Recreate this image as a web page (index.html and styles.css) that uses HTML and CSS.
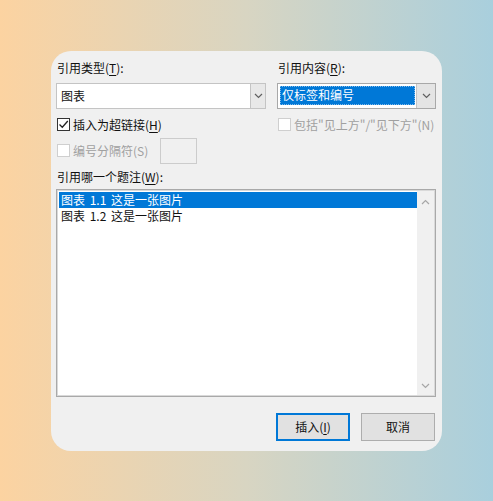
FILE: index.html
```html
<!DOCTYPE html>
<html lang="zh-CN">
<head>
    <meta charset="UTF-8">
    <meta name="viewport" content="width=device-width, initial-scale=1.0">
    <title>交叉引用</title>
    <link rel="stylesheet" href="styles.css">
</head>
<body>
    <div class="dialog">
        <div class="top-grid">
            <label class="field-label">引用类型(<u>T</u>):</label>
            <label class="field-label">引用内容(<u>R</u>):</label>

            <div class="combo">
                <span class="combo-value">图表</span>
                <span class="combo-arrow">
                    <svg width="9" height="6" viewBox="0 0 9 6"><path d="M1 1 L4.5 4.5 L8 1" fill="none" stroke="#606060" stroke-width="1.2"/></svg>
                </span>
            </div>
            <div class="combo combo-focus">
                <span class="combo-value selected">仅标签和编号</span>
                <span class="combo-arrow wide">
                    <svg width="9" height="6" viewBox="0 0 9 6"><path d="M1 1 L4.5 4.5 L8 1" fill="none" stroke="#606060" stroke-width="1.2"/></svg>
                </span>
            </div>

            <div class="check-row">
                <span class="checkbox">
                    <svg width="11" height="11" viewBox="0 0 11 11"><path d="M1.5 5.5 L4.3 8.3 L9.8 2" fill="none" stroke="#222" stroke-width="1.3"/></svg>
                </span>
                <span>插入为超链接(<u>H</u>)</span>
            </div>
            <div class="check-row disabled">
                <span class="checkbox"></span>
                <span>包括"见上方"/"见下方"(N)</span>
            </div>
        </div>

        <div class="sep-row">
            <div class="check-row disabled">
                <span class="checkbox"></span>
                <span>编号分隔符(S)</span>
            </div>
            <span class="sep-input"></span>
        </div>

        <label class="field-label list-label">引用哪一个题注(<u>W</u>):</label>

        <div class="listbox">
            <ul class="list-items">
                <li class="selected">图表 1.1 这是一张图片</li>
                <li>图表 1.2 这是一张图片</li>
            </ul>
            <div class="scrollbar">
                <svg width="9" height="6" viewBox="0 0 9 6"><path d="M1 5 L4.5 1.5 L8 5" fill="none" stroke="#a6a6a6" stroke-width="1.2"/></svg>
                <svg width="9" height="6" viewBox="0 0 9 6"><path d="M1 1 L4.5 4.5 L8 1" fill="none" stroke="#a6a6a6" stroke-width="1.2"/></svg>
            </div>
        </div>

        <div class="buttons">
            <button class="btn btn-default">插入(<u>I</u>)</button>
            <button class="btn">取消</button>
        </div>
    </div>
</body>
</html>
```

FILE: styles.css
```css
body {
    display: flex;
    justify-content: center;
    align-items: center;
    height: 100vh;
    margin: 0;
    background: linear-gradient(to right, #fcd3a1, #d8d5c2 50%, #a9cfdd);
    font-family: "Noto Sans CJK SC", "Noto Sans", sans-serif;
    font-size: 12px;
    color: #111;
}

.dialog {
    width: 391px;
    height: 400px;
    box-sizing: border-box;
    background-color: #f0f0f0;
    border-radius: 20px;
    padding: 9px 6px 0 5px;
    display: flex;
    flex-direction: column;
}

u {
    text-decoration-thickness: 1px;
    text-underline-offset: 2px;
}

.top-grid {
    display: grid;
    grid-template-columns: 210px 159px;
    column-gap: 11px;
}

.field-label {
    display: block;
    line-height: 16px;
    height: 16px;
    padding-left: 1px;
    margin-bottom: 7px;
}

.combo {
    display: flex;
    height: 26px;
    box-sizing: border-box;
    border: 1px solid #c4c4c4;
    background-color: #fff;
}

.combo-value {
    flex: 1;
    line-height: 24px;
    padding-left: 4px;
}

.combo-focus {
    padding: 2px 0 3px 2px;
    border-color: #a8a8a8;
}

.combo-value.selected {
    line-height: 18px;
    padding-left: 2px;
    background-color: #0078d7;
    color: #fff;
    outline: 1px dotted #7fb9ea;
    outline-offset: -1px;
}

.combo-arrow {
    width: 14px;
    display: flex;
    justify-content: center;
    align-items: center;
    background-color: #e8e8e8;
    border-left: 1px solid #c4c4c4;
}

.combo-arrow.wide {
    width: 18px;
    margin: -2px 0 -3px 1px;
    background-color: #e4e4e4;
}

.check-row {
    display: flex;
    align-items: center;
    gap: 3px;
    height: 16px;
    margin-top: 8px;
    padding-left: 1px;
    white-space: nowrap;
}

.checkbox {
    flex: none;
    width: 13px;
    height: 13px;
    box-sizing: border-box;
    border: 1px solid #333;
    background-color: #fff;
    display: flex;
    justify-content: center;
    align-items: center;
}

.check-row.disabled {
    color: #a0a0a0;
}

.check-row.disabled .checkbox {
    border-color: #cfcfcf;
}

.sep-row {
    display: flex;
    align-items: center;
    height: 26px;
    margin-top: 5px;
}

.sep-row .check-row {
    margin-top: 0;
}

.sep-input {
    width: 37px;
    height: 26px;
    box-sizing: border-box;
    margin-left: 12px;
    border: 1px solid #cccccc;
    background-color: #f0f0f0;
}

.list-label {
    margin-top: 5px;
    margin-bottom: 4px;
}

.listbox {
    display: flex;
    height: 208px;
    box-sizing: border-box;
    border: 1px solid #a9a9a9;
    box-shadow: inset 0 0 0 1px #d9d9d9;
    background-color: #fff;
    padding: 2px 1px 1px 1px;
}

.list-items {
    flex: 1;
    list-style: none;
    margin: 0;
    padding: 0 0 0 1px;
}

.list-items li {
    height: 16px;
    line-height: 16px;
    padding-left: 2px;
    word-spacing: 2px;
}

.list-items li.selected {
    background-color: #0078d7;
    color: #fff;
}

.scrollbar {
    width: 17px;
    margin: -1px 0 0 0;
    background-color: #f0f0f0;
    display: flex;
    flex-direction: column;
    justify-content: space-between;
    align-items: center;
    padding: 8px 0 6px;
}

.buttons {
    display: flex;
    justify-content: flex-end;
    gap: 11px;
    margin-top: 16px;
    margin-right: 1px;
}

.btn {
    width: 74px;
    height: 28px;
    border: 1px solid #adadad;
    background-color: #e1e1e1;
    font-family: inherit;
    font-size: 12px;
    color: #111;
    padding: 0;
}

.btn-default {
    border: 2px solid #0078d7;
}
```
